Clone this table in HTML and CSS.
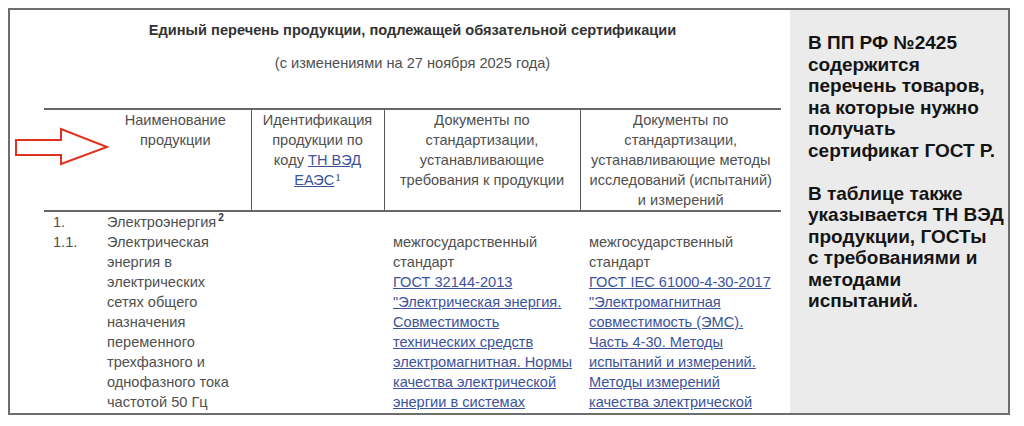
FILE: index.html
```html
<!DOCTYPE html>
<html lang="ru">
<head>
<meta charset="utf-8">
<title>Единый перечень продукции</title>
<link rel="stylesheet" href="styles.css">
</head>
<body>
<div class="frame">
  <div class="doc">
    <svg class="arrow" width="96" height="40" viewBox="0 0 96 40">
      <polygon points="2,13 47,13 47,2 93,20 47,37 47,28 2,28" fill="none" stroke="#e0321e" stroke-width="2" stroke-linejoin="miter"/>
    </svg>
    <div class="sheet">
      <h1 class="title">Единый перечень продукции, подлежащей обязательной сертификации</h1>
      <p class="subtitle">(с изменениями на 27 ноября 2025 года)</p>
      <table class="list">
        <colgroup>
          <col class="c-num"><col class="c-name"><col class="c-id"><col class="c-docs"><col class="c-methods">
        </colgroup>
        <thead>
          <tr>
            <th class="h-num"></th>
            <th class="h-name">Наименование<br>продукции</th>
            <th>Идентификация<br>продукции по<br>коду <a href="#">ТН ВЭД<br>ЕАЭС</a><sup class="fn">1</sup></th>
            <th>Документы по<br>стандартизации,<br>устанавливающие<br>требования к продукции</th>
            <th>Документы по<br>стандартизации,<br>устанавливающие методы<br>исследований (испытаний)<br>и измерений</th>
          </tr>
        </thead>
        <tbody>
          <tr>
            <td class="num">1.</td>
            <td class="name">Электроэнергия<sup class="fn2">2</sup></td>
            <td></td><td></td><td></td>
          </tr>
          <tr>
            <td class="num">1.1.</td>
            <td class="name">Электрическая энергия в электрических сетях общего назначения переменного трехфазного и однофазного тока частотой 50&nbsp;Гц</td>
            <td></td>
            <td class="docs">межгосударственный стандарт<br><a href="#">ГОСТ 32144-2013 "Электрическая энергия. Совместимость технических средств электромагнитная. Нормы качества электрической энергии в системах электроснабжения общего назначения"</a></td>
            <td class="docs">межгосударственный стандарт<br><a href="#">ГОСТ IEC 61000-4-30-2017 "Электромагнитная совместимость (ЭМС). Часть 4-30. Методы испытаний и измерений. Методы измерений качества электрической энергии"</a></td>
          </tr>
        </tbody>
      </table>
    </div>
  </div>
  <aside class="note">
    <p>В ПП РФ №2425<br>содержится<br>перечень товаров,<br>на которые нужно<br>получать<br>сертификат ГОСТ Р.</p>
    <p>В таблице также<br>указывается ТН ВЭД<br>продукции, ГОСТы<br>с требованиями и<br>методами<br>испытаний.</p>
  </aside>
</div>
</body>
</html>
```

FILE: styles.css
```css
html, body {
  margin: 0;
  padding: 0;
  background: #ffffff;
}

body {
  padding: 8px;
  font-family: "Liberation Sans", Arial, sans-serif;
}

.frame {
  width: 1002px;
  height: 407px;
  box-sizing: border-box;
  border: 2px solid #6e6e6e;
  display: flex;
  overflow: hidden;
}

.doc {
  position: relative;
  width: 780px;
  flex: none;
  background: #ffffff;
  overflow: hidden;
}

.arrow {
  position: absolute;
  left: 4px;
  top: 117px;
}

.sheet {
  width: 737px;
  margin-left: 34px;
  padding-top: 10px;
  color: #505050;
  font-size: 14.6px;
  line-height: 20px;
}

.title {
  margin: 0;
  text-align: center;
  font-size: 14.6px;
  line-height: 20px;
  font-weight: bold;
  color: #333333;
}

.subtitle {
  margin: 13px 0 0;
  text-align: center;
  color: #505050;
}

.list {
  margin-top: 35px;
  width: 737px;
  border-collapse: collapse;
  table-layout: fixed;
}

.c-num { width: 56px; }
.c-name { width: 151px; }
.c-id { width: 133px; }
.c-docs { width: 196px; }
.c-methods { width: 201px; }

.list thead tr {
  border-top: 2px solid #666666;
  border-bottom: 2px solid #666666;
}

.list th {
  font-weight: normal;
  text-align: center;
  vertical-align: top;
  padding: 0 6px;
  height: 100px;
  color: #505050;
  border-left: 1px solid #555555;
}

.list th.h-num,
.list th.h-name {
  border-left: none;
}

.list th.h-name {
  padding: 0;
}

.list td {
  vertical-align: top;
  padding: 0 9px;
  color: #505050;
}

.list td.name {
  padding: 0 14px 0 7px;
}

.list td.docs {
  padding: 0 6px 0 9px;
}

a {
  color: #3c539c;
  text-decoration: underline;
}

.fn {
  font-family: "Liberation Serif", serif;
  font-size: 11px;
  line-height: 0;
  margin-left: 1px;
  vertical-align: 4px;
  color: #333333;
}

.fn2 {
  font-size: 10px;
  font-weight: bold;
  line-height: 0;
  margin-left: 2px;
  color: #333333;
}

.note {
  flex: 1;
  background: #ebebeb;
  padding: 22px 4px 0 18px;
  color: #141414;
  font-size: 19px;
  line-height: 21.5px;
  font-weight: bold;
}

.note p {
  margin: 0 0 21.5px;
  white-space: nowrap;
}
```
